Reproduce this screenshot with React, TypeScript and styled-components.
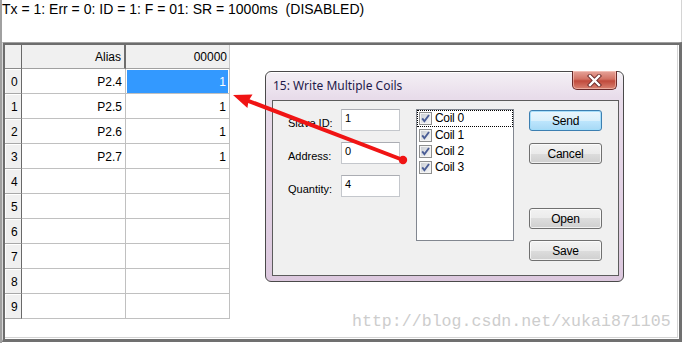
import React from 'react';
import styled, { createGlobalStyle } from 'styled-components';

const GlobalStyle = createGlobalStyle`
  html, body { margin: 0; padding: 0; background: #ffffff; }
  #root { width: 683px; height: 343px; }
`;

const rows = ['P2.4', 'P2.5', 'P2.6', 'P2.7', '', '', '', '', '', ''];
const values = ['1', '1', '1', '1', '', '', '', '', '', ''];
const coils = ['Coil 0', 'Coil 1', 'Coil 2', 'Coil 3'];

const App = () => {
	return (
		<>
			<GlobalStyle />
			<Page>
				<StatusBar>{'Tx = 1: Err = 0: ID = 1: F = 01: SR = 1000ms  (DISABLED)'}</StatusBar>
				<LowerPanel>
					<Grid>
						<Corner />
						<ColHead $divider>Alias</ColHead>
						<ColHead>00000</ColHead>
						{rows.map((alias, i) => (
							<React.Fragment key={i}>
								<RowHead>{i}</RowHead>
								<DataCell>{alias}</DataCell>
								<DataCell $selected={i === 0}>{values[i]}</DataCell>
							</React.Fragment>
						))}
					</Grid>
				</LowerPanel>

				<Dialog>
					<TitleBar>
						<Title>15: Write Multiple Coils</Title>
						<CloseButton>
							<svg width='17' height='13' viewBox='0 0 17 13'>
								<path d='M4 2 L13 11 M13 2 L4 11' stroke='#6a2a2a' strokeWidth='4.2' strokeLinecap='square' />
								<path d='M4 2 L13 11 M13 2 L4 11' stroke='#ffffff' strokeWidth='2.4' strokeLinecap='square' />
							</svg>
						</CloseButton>
					</TitleBar>
					<Client>
						<Fields>
							<FieldRow>
								<Label>Slave ID:</Label>
								<TextBox>1</TextBox>
							</FieldRow>
							<FieldRow>
								<Label>Address:</Label>
								<TextBox>0</TextBox>
							</FieldRow>
							<FieldRow>
								<Label>Quantity:</Label>
								<TextBox>4</TextBox>
							</FieldRow>
						</Fields>
						<ListBox>
							{coils.map((c, i) => (
								<ListItem key={c} $focused={i === 0}>
									<CheckBox />
									<span>{c}</span>
								</ListItem>
							))}
						</ListBox>
						<Buttons>
							<Button $default $gap={1}>Send</Button>
							<Button $gap={12}>Cancel</Button>
							<Button $gap={44}>Open</Button>
							<Button $gap={11}>Save</Button>
						</Buttons>
					</Client>
				</Dialog>

				<Overlay width='683' height='343' viewBox='0 0 683 343'>
					<line x1='403' y1='160' x2='243' y2='98.8' stroke='#f01414' strokeWidth='4' />
					<path d='M233 95 L252.5 94.6 L248.6 100.8 L247.4 108 Z' fill='#f01414' />
					<circle cx='403' cy='160' r='4.2' fill='#f01414' />
				</Overlay>
				<Watermark>http://blog.csdn.net/xukai871105</Watermark>
			</Page>
		</>
	);
};
export default App;

const CheckBox = () => (
	<svg width='13' height='13' viewBox='0 0 13 13'>
		<defs>
			<linearGradient id='cbg' x1='0' y1='0' x2='1' y2='1'>
				<stop offset='0' stopColor='#cbcfd5' />
				<stop offset='1' stopColor='#f6f6f6' />
			</linearGradient>
		</defs>
		<rect x='0.5' y='0.5' width='12' height='12' fill='#f4f4f4' stroke='#8e8f8f' />
		<rect x='2' y='2' width='9' height='9' fill='url(#cbg)' />
		<path d='M3.2 6.4 L5.4 9.2 L10 3' stroke='#4a5d96' strokeWidth='1.9' fill='none' />
	</svg>
);

const Page = styled.div`
	position: relative;
	width: 683px;
	height: 343px;
	box-sizing: border-box;
	border-left: 2px solid #a0a0a0;
	padding-right: 1px;
	display: flex;
	flex-direction: column;
	overflow: hidden;
	background: #ffffff;
	font-family: 'Liberation Sans', Arial, sans-serif;
`;

const StatusBar = styled.div`
	height: 42px;
	flex: none;
	box-sizing: border-box;
	border-right: 1px solid #d4d4d4;
	font-size: 14px;
	line-height: 16px;
	padding-top: 1px;
	white-space: pre;
	color: #000000;
`;

const LowerPanel = styled.div`
	height: 300px;
	flex: none;
	box-sizing: border-box;
	border-style: solid;
	border-color: #a0a0a0 #707070 #707070 #d8d8d8;
	border-width: 1px 3px 3px 1px;
	box-shadow: inset 2px 2px 0 #6d6d6d, inset -1px -1px 0 #ffffff,
		inset -2px -2px 0 #d4d4d4;
	padding: 2px 0 0 2px;
	background: #ffffff;
`;

const Grid = styled.div`
	display: grid;
	grid-template-columns: 17px 104px 104px;
	grid-template-rows: 24px repeat(10, 25px);
	width: max-content;
	font-size: 12px;
	color: #000000;
`;

const Corner = styled.div`
	box-sizing: border-box;
	background: #f0f0f0;
	border-right: 1px solid #696969;
	border-bottom: 1px solid #8a8a8a;
`;

const ColHead = styled.div<{ $divider?: boolean }>`
	box-sizing: border-box;
	display: flex;
	align-items: center;
	justify-content: flex-end;
	padding: 1px ${(p) => (p.$divider ? '3px' : '2px')} 0 0;
	background: #f0f0f0;
	border-bottom: 1px solid #a0a0a0;
	border-right: ${(p) => (p.$divider ? '2px solid #6d6d6d' : '1px solid #c8c8c8')};
`;

const RowHead = styled.div`
	box-sizing: border-box;
	display: flex;
	align-items: center;
	padding: 2px 0 0 6px;
	background: #f0f0f0;
	border-right: 1px solid #696969;
	border-bottom: 1px solid #a8a8a8;
	box-shadow: inset 1px 1px 0 #ffffff;
`;

const DataCell = styled.div<{ $selected?: boolean }>`
	box-sizing: border-box;
	display: flex;
	align-items: center;
	justify-content: flex-end;
	padding: 2px 3px 0 0;
	border-right: 1px solid #c0c0c0;
	border-bottom: 1px solid #c0c0c0;
	background: ${(p) => (p.$selected ? '#3399ff' : '#ffffff')};
	color: ${(p) => (p.$selected ? '#ffffff' : '#000000')};
	box-shadow: ${(p) => (p.$selected ? 'inset 1px 1px 0 #ffffff, inset -1px 0 0 #ffffff' : 'none')};
`;

const Dialog = styled.div`
	position: absolute;
	left: 263px;
	top: 71px;
	width: 359px;
	height: 211px;
	box-sizing: border-box;
	border: 1px solid #4a4a4a;
	border-radius: 6px;
	background: linear-gradient(180deg, #f4f0f5 0px, #e8dcea 26px, #dcc8de 100%);
	padding: 0 4px 5px 6px;
	display: flex;
	flex-direction: column;
	box-shadow: inset 0 1px 0 #ffffff;
`;

const TitleBar = styled.div`
	height: 28px;
	flex: none;
	display: flex;
	align-items: flex-start;
	justify-content: space-between;
`;

const Title = styled.span`
	margin-top: 6px;
	margin-left: 1px;
	font-family: 'Noto Sans', 'Open Sans', sans-serif;
	font-size: 12px;
	line-height: 16px;
	color: #1e1a4a;
`;

const CloseButton = styled.div`
	margin-top: -1px;
	margin-right: 2px;
	width: 45px;
	height: 19px;
	box-sizing: border-box;
	display: flex;
	align-items: center;
	justify-content: center;
	border: 1px solid #6a2a2a;
	border-top: none;
	border-radius: 0 0 5px 5px;
	background: linear-gradient(180deg, #e6a49a 0%, #d27264 45%, #c04a3c 55%, #d98272 100%);
	box-shadow: inset 0 0 0 1px rgba(255, 220, 210, 0.5);
`;

const Client = styled.div`
	flex: 1;
	box-sizing: border-box;
	border: 1px solid #5c5c5c;
	background: #f0f0f0;
	display: flex;
	align-items: flex-start;
	padding: 8px 0 0 15px;
	font-family: 'Liberation Sans', Arial, sans-serif;
	font-size: 11px;
	color: #000000;
`;

const Fields = styled.div`
	display: flex;
	flex-direction: column;
	gap: 11px;
`;

const FieldRow = styled.div`
	display: flex;
	align-items: flex-end;
	height: 22px;
`;

const Label = styled.span`
	width: 53px;
	line-height: 13px;
	padding-bottom: 1px;
`;

const TextBox = styled.div`
	width: 59px;
	height: 22px;
	box-sizing: border-box;
	background: #ffffff;
	border: 1px solid #c4c7cc;
	border-top-color: #abadb3;
	padding: 2px 0 0 3px;
	line-height: 13px;
`;

const ListBox = styled.div`
	margin-left: 16px;
	width: 98px;
	height: 132px;
	box-sizing: border-box;
	background: #ffffff;
	border: 1px solid #828790;
	display: flex;
	flex-direction: column;
`;

const ListItem = styled.div<{ $focused?: boolean }>`
	height: 16px;
	box-sizing: border-box;
	display: flex;
	align-items: center;
	gap: 3px;
	padding-left: 2px;
	outline: ${(p) => (p.$focused ? '1px dotted #000000' : 'none')};
	outline-offset: -1px;
	&:first-child {
		height: 17px;
	}
	span {
		line-height: 13px;
		font-size: 12px;
		letter-spacing: -0.3px;
	}
`;

const Buttons = styled.div`
	margin-left: 15px;
	display: flex;
	flex-direction: column;
`;

const Button = styled.div<{ $default?: boolean; $gap: number }>`
	margin-top: ${(p) => p.$gap}px;
	width: 73px;
	height: 21px;
	box-sizing: border-box;
	display: flex;
	align-items: center;
	justify-content: center;
	border-radius: 3px;
	border: 1px solid ${(p) => (p.$default ? '#3c7fb1' : '#707070')};
	background: ${(p) =>
		p.$default
			? 'linear-gradient(180deg, #eaf6fd 0%, #d9f0fc 50%, #bee6fd 50%, #a7d9f5 100%)'
			: 'linear-gradient(180deg, #f2f2f2 0%, #ebebeb 50%, #dddddd 50%, #cfcfcf 100%)'};
	box-shadow: inset 0 0 0 1px
		${(p) => (p.$default ? 'rgba(160, 220, 250, 0.9)' : 'rgba(255, 255, 255, 0.7)')};
	font-size: 12px;
	letter-spacing: -0.2px;
`;

const Overlay = styled.svg`
	position: absolute;
	left: -2px;
	top: 0;
	pointer-events: none;
`;

const Watermark = styled.div`
	position: absolute;
	left: 350px;
	top: 312px;
	font-family: 'Liberation Mono', 'Courier New', monospace;
	font-size: 16.6px;
	line-height: 19px;
	color: #cdcdcd;
	white-space: pre;
`;
